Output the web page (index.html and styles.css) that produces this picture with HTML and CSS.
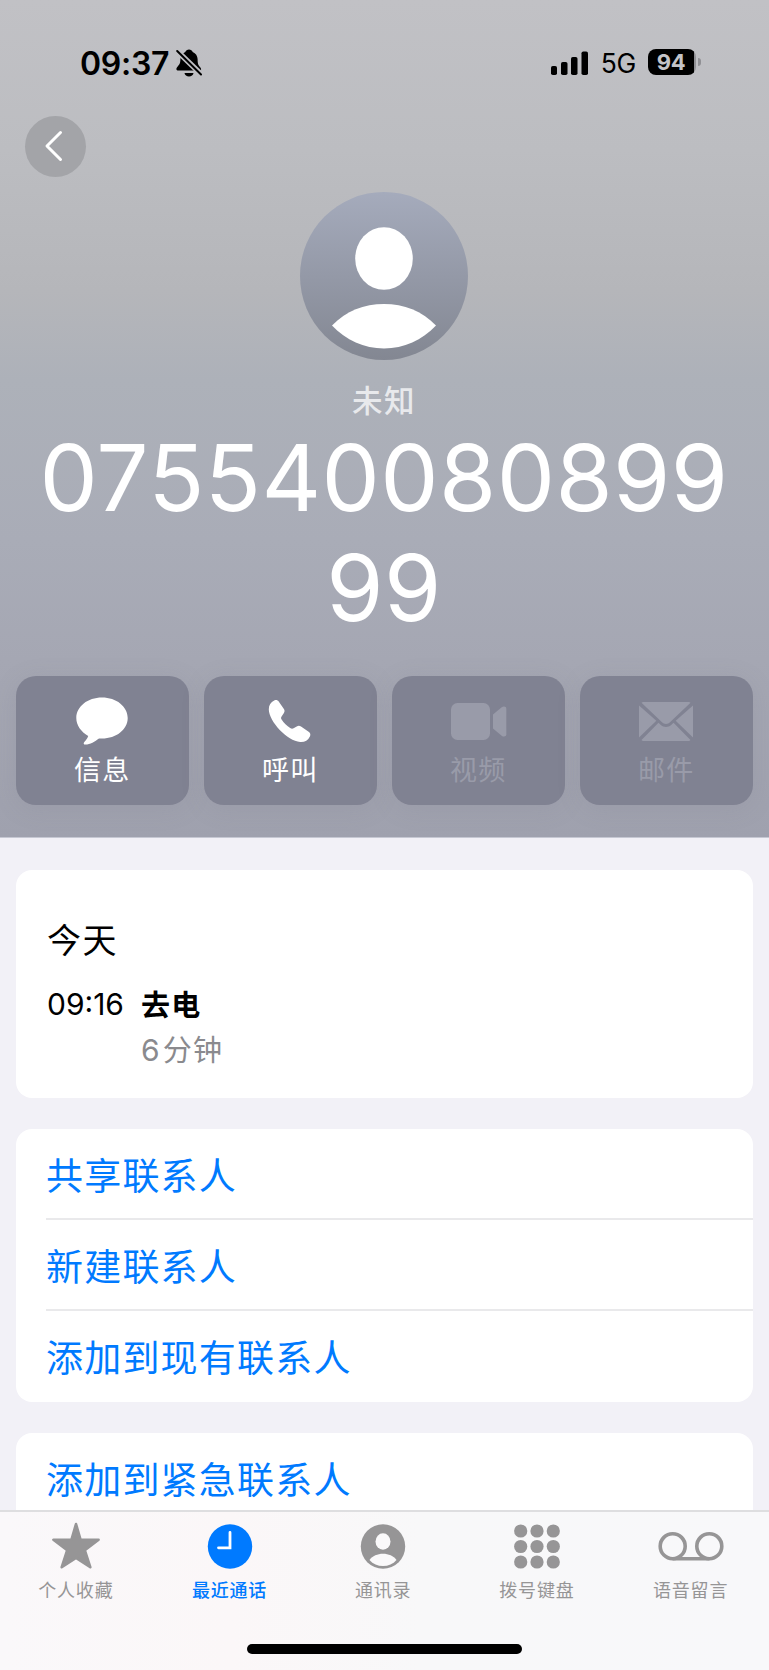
FILE: index.html
```html
<!DOCTYPE html>
<html lang="zh-CN">
<head>
  <meta charset="UTF-8">
  <meta name="viewport" content="width=device-width, initial-scale=1.0">
  <title>最近通话</title>
  <link rel="stylesheet" href="styles.css">
</head>
<body>
  <div class="phone">
    <header class="hero">
      <!-- Status bar -->
      <div class="status-bar">
        <span class="status-time">09:37</span>
        <svg class="icon-bell" viewBox="0 0 26 28" aria-hidden="true">
          <path d="M13 0.500c1.700 0 3.200 1 3.700 2.400 3 1.200 4.900 4 4.900 7.200 0 5 0.700 6.200 2.600 8.200 0.800 0.900 0.900 1.600 0.900 3.100H1.500c-1.300 0-1.500-1.800-0.600-2.900 2.400-2.900 3.500-3.700 3.500-8.400 0-3.200 1.900-6 4.900-7.200C9.800 1.500 11.300 0.500 13 0.500z"/>
          <path d="M8.500 24h9c-0.300 2.200-2.200 3.500-4.500 3.500s-4.200-1.300-4.500-3.500z"/>
          <path class="bell-gap" d="M-1 0L27 27"/>
          <path class="bell-slash" d="M1.200 2L25 25.500"/>
        </svg>
        <div class="status-right">
          <svg class="icon-signal" viewBox="0 0 37 24" aria-hidden="true">
            <rect x="0" y="15" width="6" height="9" rx="1.800"/>
            <rect x="10" y="11" width="6.500" height="13" rx="1.800"/>
            <rect x="20" y="6" width="6.500" height="18" rx="1.800"/>
            <rect x="30.500" y="0.500" width="6.500" height="23.500" rx="1.800"/>
          </svg>
          <span class="network">5G</span>
          <div class="battery">
            <span class="battery-level">94</span>
          </div>
        </div>
      </div>

      <button class="back-button" aria-label="返回">
        <svg viewBox="0 0 61 61" aria-hidden="true"><path d="M35.500 16.500L22 30l13.500 13.500"/></svg>
      </button>

      <!-- Contact poster -->
      <svg class="avatar" viewBox="0 0 168 168" aria-hidden="true">
        <defs>
          <linearGradient id="avatar-fill" x1="0" y1="0" x2="0" y2="1">
            <stop offset="0" stop-color="#a5abbc"/>
            <stop offset="1" stop-color="#838792"/>
          </linearGradient>
        </defs>
        <circle cx="84" cy="84" r="84" fill="url(#avatar-fill)"/>
        <ellipse cx="84" cy="66.500" rx="28.800" ry="31.300" fill="#fff"/>
        <path d="M32 133.500C46 119 64 112 84 112s38 7 52 21.500C122 148 104 156.500 84 156.500S46 148 32 133.500z" fill="#fff"/>
      </svg>
      <p class="contact-label">未知</p>
      <h1 class="contact-number"><span>075540080899</span><span>99</span></h1>

      <div class="actions">
        <button class="action">
          <svg viewBox="0 0 58 52" aria-hidden="true">
            <path d="M29 2.500c14.300 0 25.700 9 25.700 20.500S43.300 43.500 29 43.500l-3-0.100c-4 3-9 6-13.500 6.200-2 0-2.300-1.600-1.200-2.700 1.500-1.700 3.200-3.700 3.900-6C8 36.800 3.300 30.300 3.300 23 3.300 11.500 14.700 2.500 29 2.500z"/>
          </svg>
          <span>信息</span>
        </button>
        <button class="action">
          <svg viewBox="0 0 58 52" aria-hidden="true">
            <path d="M13.200 5.600c1.800-0.900 3.400-0.500 4.500 1l5.200 7.400c0.900 1.300 0.800 2.500 0 3.900l-2.300 3.500c-0.700 1.100-0.700 2 0 3.100 2.100 3.300 5.400 6.500 8.600 8.600 1.200 0.800 2.300 0.900 3.400 0.200l3.100-1.900c1.500-0.900 2.900-0.900 4.300 0l8 5.600c1.500 1.100 1.700 2.700 0.900 4.500-1.900 3.900-5.400 5.800-9.700 5.500C26.500 46 8 26.500 7.800 14.500c-0.100-4 2-7.200 5.400-8.900z"/>
          </svg>
          <span>呼叫</span>
        </button>
        <button class="action is-disabled" disabled>
          <svg viewBox="0 0 58 52" aria-hidden="true">
            <rect x="2" y="8" width="39" height="37" rx="6.500"/>
            <path d="M44 19.500l8.700-7.200c2-1.600 4.600-0.900 4.600 1.400v25.600c0 2.300-2.600 3-4.600 1.400l-8.700-7.200z"/>
          </svg>
          <span>视频</span>
        </button>
        <button class="action is-disabled" disabled>
          <svg viewBox="0 0 58 52" aria-hidden="true">
            <path d="M6.500 7h45c0.900 0 1.500 0.300 2 0.800L33.500 26.700c-3 3-6 3-9 0L4.500 7.800C5 7.300 5.600 7 6.500 7z"/>
            <path d="M2 10.500L19.300 25.700 2 42.500z"/>
            <path d="M56 10.500L38.700 25.700 56 42.500z"/>
            <path d="M4.500 45L21.500 27.800l2 2c3.400 3 7.600 3 11 0l2-2L53.500 45c-0.500 0.600-1.100 1-2 1h-45c-0.900 0-1.500-0.400-2-1z"/>
          </svg>
          <span>邮件</span>
        </button>
      </div>
    </header>

    <main class="content">
      <section class="card call-log">
        <h2 class="log-day">今天</h2>
        <div class="log-row">
          <span class="log-time">09:16</span>
          <div class="log-info">
            <span class="log-type">去电</span>
            <span class="log-duration"><span class="log-digit">6</span>分钟</span>
          </div>
        </div>
      </section>

      <ul class="card link-list">
        <li><a href="#">共享联系人</a></li>
        <li><a href="#">新建联系人</a></li>
        <li><a href="#">添加到现有联系人</a></li>
      </ul>

      <ul class="card link-list">
        <li><a href="#">添加到紧急联系人</a></li>
      </ul>
    </main>

    <!-- Tab bar -->
    <nav class="tab-bar">
      <div class="tabs">
        <a class="tab" href="#">
          <svg viewBox="0 0 70 50" aria-hidden="true">
            <path d="M35 4l4.600 15.800h18L43.800 30.200l5.500 17L35 37.800 20.700 47.200l5.500-17L12.400 19.800h18z" stroke="currentColor" stroke-width="2.600" stroke-linejoin="round"/>
          </svg>
          <span>个人收藏</span>
        </a>
        <a class="tab is-active" href="#">
          <svg viewBox="0 0 70 50" aria-hidden="true">
            <circle cx="35" cy="26.500" r="22.200"/>
            <path d="M35 12.500v15.300H23.500" fill="none" stroke="#fff" stroke-width="2.800" stroke-linecap="round"/>
          </svg>
          <span>最近通话</span>
        </a>
        <a class="tab" href="#">
          <svg viewBox="0 0 70 50" aria-hidden="true">
            <circle cx="35" cy="26.500" r="22.200"/>
            <ellipse cx="35" cy="21.500" rx="7.500" ry="8.300" fill="#faf9fa"/>
            <path d="M21.500 40c3-4.200 8-6.300 13.500-6.300S45.500 35.800 48.500 40C45 44 40.300 46 35 46s-10-2-13.500-6z" fill="#faf9fa"/>
          </svg>
          <span>通讯录</span>
        </a>
        <a class="tab" href="#">
          <svg viewBox="0 0 70 50" aria-hidden="true">
            <circle cx="18.700" cy="11" r="6.600"/><circle cx="35" cy="11" r="6.600"/><circle cx="51.300" cy="11" r="6.600"/>
            <circle cx="18.700" cy="26.500" r="6.600"/><circle cx="35" cy="26.500" r="6.600"/><circle cx="51.300" cy="26.500" r="6.600"/>
            <circle cx="18.700" cy="42" r="6.600"/><circle cx="35" cy="42" r="6.600"/><circle cx="51.300" cy="42" r="6.600"/>
          </svg>
          <span>拨号键盘</span>
        </a>
        <a class="tab" href="#">
          <svg viewBox="0 0 70 50" aria-hidden="true">
            <g fill="none" stroke="currentColor" stroke-width="3.600">
              <circle cx="16.700" cy="26.200" r="12.500"/>
              <circle cx="53.300" cy="26.200" r="12.500"/>
              <path d="M16.700 38.700h36.600"/>
            </g>
          </svg>
          <span>语音留言</span>
        </a>
      </div>
      <div class="home-indicator"></div>
    </nav>
  </div>
</body>
</html>
```

FILE: styles.css
```css
* {
  box-sizing: border-box;
}

body {
  margin: 0;
  font-family: Inter, "Noto Sans CJK SC", sans-serif;
  background: #f2f1f7;
  color: #000;
}

h1, h2, p, ul {
  margin: 0;
  padding: 0;
  font-weight: 400;
}

button {
  border: none;
  padding: 0;
  font: inherit;
}

a {
  text-decoration: none;
}

.phone {
  display: flex;
  flex-direction: column;
  width: 769px;
  height: 1670px;
  overflow: hidden;
}

/* Header with the contact poster */
.hero {
  display: flex;
  flex-direction: column;
  align-items: center;
  flex: none;
  height: 838px;
  padding-right: 1px;
  border-bottom: 1px solid #c6c8d3;
  background: linear-gradient(#c1c1c5 0, #bcbdc1 150px, #b5b6ba 290px, #adb1b9 380px, #a9acb7 540px, #a5a7b3 660px, #9fa1ae 837px);
}

.status-bar {
  display: flex;
  align-items: center;
  align-self: stretch;
  height: 40px;
  margin-top: 43px;
  padding: 0 68px 0 80px;
}

.status-time {
  font-size: 32px;
  font-weight: 600;
  letter-spacing: -0.3px;
}

.icon-bell {
  width: 26px;
  height: 28px;
  margin: -1px 0 0 7px;
}

.bell-gap {
  stroke: #bfbfc3;
  stroke-width: 5.5;
}

.bell-slash {
  stroke: #000;
  stroke-width: 2;
  stroke-linecap: round;
}

.status-right {
  display: flex;
  align-items: center;
  margin-left: auto;
}

.icon-signal {
  width: 37px;
  height: 24px;
  margin-top: -1px;
}

.network {
  margin-left: 13px;
  font-size: 26.5px;
  letter-spacing: -0.3px;
}

.battery {
  position: relative;
  width: 48px;
  height: 26px;
  margin: -2px 4px 0 12px;
  border-radius: 8px;
  background: linear-gradient(90deg, #000 46px, #909094 46px);
  text-align: center;
}

.battery::after {
  content: "";
  position: absolute;
  right: -5px;
  top: 9px;
  width: 3px;
  height: 8px;
  border-radius: 0 3px 3px 0;
  background: #909094;
}

.battery-level {
  display: block;
  padding-right: 2px;
  color: #c4c4c8;
  font-size: 22px;
  font-weight: 700;
  line-height: 27px;
  letter-spacing: -0.4px;
}

.back-button {
  align-self: flex-start;
  width: 61px;
  height: 61px;
  margin: 33px 0 0 25px;
  border-radius: 50%;
  background: #a3a4a8;
}

.back-button svg {
  display: block;
  fill: none;
  stroke: #fff;
  stroke-width: 3;
  stroke-linecap: round;
  stroke-linejoin: round;
}

.avatar {
  flex: none;
  width: 168px;
  height: 168px;
  margin-top: 15px;
}

.contact-label {
  margin-top: 19px;
  color: #e8e9ec;
  font-size: 30.5px;
  font-weight: 500;
  line-height: 44px;
  letter-spacing: 1.5px;
}

.contact-number {
  display: flex;
  flex-direction: column;
  align-items: center;
  width: 720px;
  height: 220px;
  margin-top: -1px;
  color: #fff;
  font-size: 92.5px;
  line-height: 110px;
  letter-spacing: 0.4px;
}

.actions {
  display: grid;
  grid-template-columns: repeat(4, 1fr);
  gap: 15.5px;
  align-self: stretch;
  margin-top: 34px;
  padding: 0 15.5px 0 16px;
}

.action {
  display: flex;
  flex-direction: column;
  align-items: center;
  height: 129px;
  padding-top: 19px;
  border-radius: 20px;
  background: #808292;
  box-shadow: 0 4px 24px rgba(110, 112, 125, 0.14);
  color: #fff;
  font-size: 27px;
  line-height: 40px;
  letter-spacing: 1.2px;
}

.action svg {
  width: 58px;
  height: 52px;
  fill: currentColor;
}

.action span {
  margin-top: 4px;
}

.is-disabled {
  color: #999ba9;
}

/* Grouped cards */
.content {
  display: flex;
  flex-direction: column;
  gap: 31px;
  flex: 1;
  min-height: 0;
  padding: 32px 16px 0;
  overflow: hidden;
}

.card {
  flex: none;
  border-radius: 16px;
  background: #fff;
}

.call-log {
  height: 228px;
  padding: 47px 31px 0;
}

.log-day {
  font-size: 34px;
  line-height: 48px;
  letter-spacing: 1.5px;
}

.log-row {
  display: flex;
  margin-top: 17px;
  font-size: 29px;
  line-height: 44px;
}

.log-time {
  width: 94px;
  font-size: 30px;
}

.log-info {
  display: flex;
  flex-direction: column;
  padding-top: 2px;
  letter-spacing: 1.2px;
}

.log-type {
  font-weight: 700;
}

.log-duration {
  color: #8a8a8e;
}

.log-digit {
  margin-right: 2px;
  font-size: 30px;
}

.link-list {
  padding-left: 30px;
  list-style: none;
}

.link-list li {
  height: 91px;
  padding-top: 2px;
  border-bottom: 2px solid #e9e9eb;
}

.link-list li:last-child {
  border-bottom: none;
}

.link-list a {
  display: block;
  color: #007aff;
  font-size: 37px;
  line-height: 91px;
  letter-spacing: 1.2px;
}

.tab-bar {
  flex: none;
  height: 160px;
  border-top: 2px solid #dedee0;
  background: linear-gradient(90deg, #faf8fa, #fbf7f8 30%, #f8f8f9 55%, #f8f8fa);
}

.tabs {
  display: grid;
  grid-template-columns: repeat(5, 153.7px);
  margin-left: -1px;
}

.tab {
  display: flex;
  flex-direction: column;
  align-items: center;
  padding-top: 8px;
  color: #969596;
  font-size: 18px;
  line-height: 26px;
  letter-spacing: 0.8px;
}

.tab svg {
  width: 70px;
  height: 50px;
  fill: currentColor;
}

.tab span {
  margin-top: 8px;
  white-space: nowrap;
}

.is-active {
  color: #007aff;
  font-weight: 500;
}

.home-indicator {
  width: 275px;
  height: 10px;
  margin: 40px 0 0 247px;
  border-radius: 5px;
  background: #000;
}
```
